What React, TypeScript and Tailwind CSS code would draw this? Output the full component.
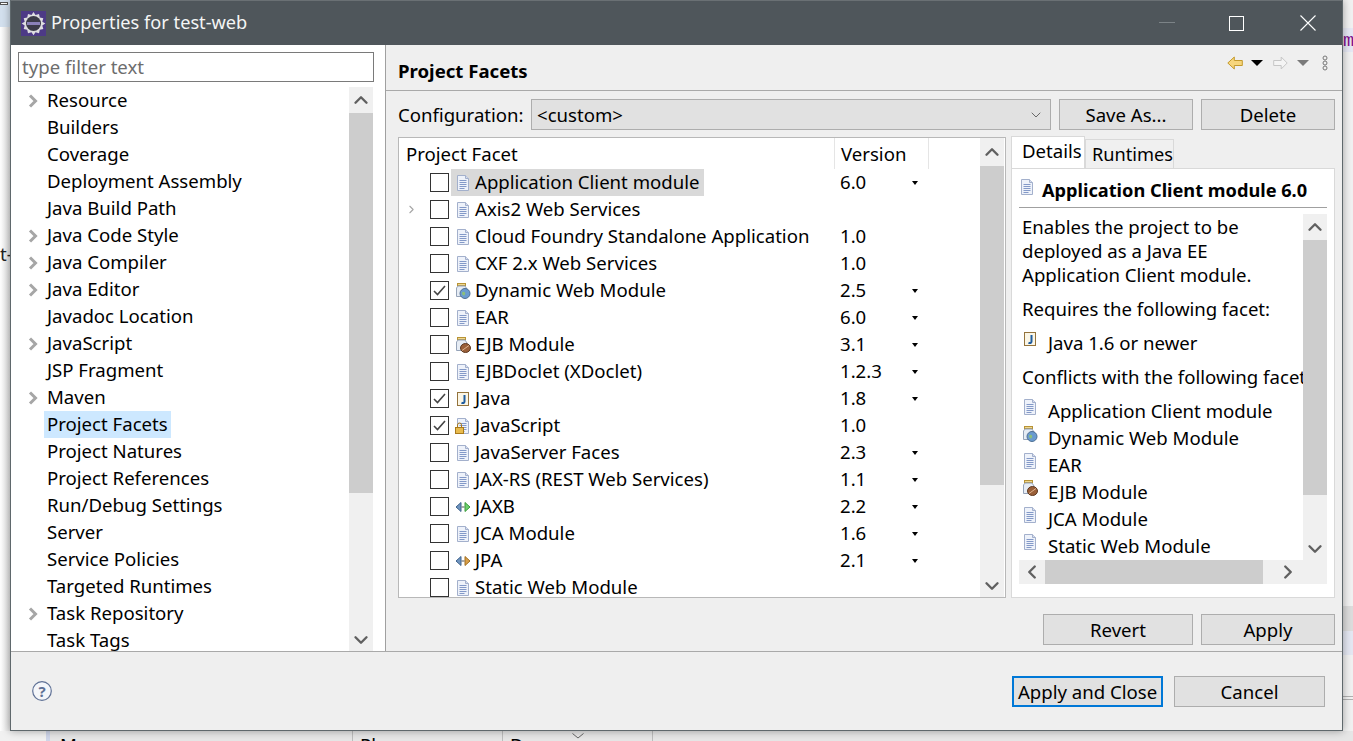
import React from 'react';
import { ChevronDown, ChevronLeft, ChevronRight, ChevronUp } from 'lucide-react';

const treeItems = [
  { name: 'Resource', arrow: true },
  { name: 'Builders' },
  { name: 'Coverage' },
  { name: 'Deployment Assembly' },
  { name: 'Java Build Path' },
  { name: 'Java Code Style', arrow: true },
  { name: 'Java Compiler', arrow: true },
  { name: 'Java Editor', arrow: true },
  { name: 'Javadoc Location' },
  { name: 'JavaScript', arrow: true },
  { name: 'JSP Fragment' },
  { name: 'Maven', arrow: true },
  { name: 'Project Facets', selected: true },
  { name: 'Project Natures' },
  { name: 'Project References' },
  { name: 'Run/Debug Settings' },
  { name: 'Server' },
  { name: 'Service Policies' },
  { name: 'Targeted Runtimes' },
  { name: 'Task Repository', arrow: true },
  { name: 'Task Tags' },
];

type IconKind = 'page' | 'web' | 'ejb' | 'java' | 'js' | 'jaxb' | 'jpa';

const facets: { name: string; icon: IconKind; version: string; drop?: boolean; checked?: boolean; selected?: boolean; expand?: boolean }[] = [
  { name: 'Application Client module', icon: 'page', version: '6.0', drop: true, selected: true },
  { name: 'Axis2 Web Services', icon: 'page', version: '', expand: true },
  { name: 'Cloud Foundry Standalone Application', icon: 'page', version: '1.0' },
  { name: 'CXF 2.x Web Services', icon: 'page', version: '1.0' },
  { name: 'Dynamic Web Module', icon: 'web', version: '2.5', drop: true, checked: true },
  { name: 'EAR', icon: 'page', version: '6.0', drop: true },
  { name: 'EJB Module', icon: 'ejb', version: '3.1', drop: true },
  { name: 'EJBDoclet (XDoclet)', icon: 'page', version: '1.2.3', drop: true },
  { name: 'Java', icon: 'java', version: '1.8', drop: true, checked: true },
  { name: 'JavaScript', icon: 'js', version: '1.0', checked: true },
  { name: 'JavaServer Faces', icon: 'page', version: '2.3', drop: true },
  { name: 'JAX-RS (REST Web Services)', icon: 'page', version: '1.1', drop: true },
  { name: 'JAXB', icon: 'jaxb', version: '2.2', drop: true },
  { name: 'JCA Module', icon: 'page', version: '1.6', drop: true },
  { name: 'JPA', icon: 'jpa', version: '2.1', drop: true },
  { name: 'Static Web Module', icon: 'page', version: '' },
];

const conflicts: { name: string; icon: IconKind }[] = [
  { name: 'Application Client module', icon: 'page' },
  { name: 'Dynamic Web Module', icon: 'web' },
  { name: 'EAR', icon: 'page' },
  { name: 'EJB Module', icon: 'ejb' },
  { name: 'JCA Module', icon: 'page' },
  { name: 'Static Web Module', icon: 'page' },
];

function FacetIcon({ kind }: { kind: IconKind }) {
  if (kind === 'page' || kind === 'js') {
    return (
      <svg width="16" height="16" viewBox="0 0 16 16" className="shrink-0">
        <path d="M2.500.500h8l3 3v12h-11z" fill="#eef2fa" stroke="#a3b0cc" />
        <path d="M10.500.500v3h3" fill="#d5dcee" stroke="#a3b0cc" />
        <path d="M4.500 5.500h7M4.500 7.500h7M4.500 9.500h7M4.500 11.500h7M4.500 13.500h5" stroke="#8399c8" />
        {kind === 'js' && (
          <g>
            <rect x="0.500" y="9.500" width="8" height="6" fill="#e8bb4e" stroke="#a97a1c" />
            <path d="M2.500 9.500V7a2 2 0 0 1 4 0v2.500" fill="none" stroke="#a97a1c" />
          </g>
        )}
      </svg>
    );
  }
  if (kind === 'java') {
    return (
      <svg width="16" height="16" viewBox="0 0 16 16" className="shrink-0">
        <rect x="2.500" y="1.500" width="11" height="13" fill="#fbf6e6" stroke="#94733c" />
        <path d="M9.500 4v6.500c0 1.500-1.500 2-3 1.200" fill="none" stroke="#1f5c9e" strokeWidth="2" />
      </svg>
    );
  }
  if (kind === 'web' || kind === 'ejb') {
    return (
      <svg width="16" height="16" viewBox="0 0 16 16" className="shrink-0">
        <rect x="2.500" y="0.500" width="8" height="2" fill="#f1d98e" stroke="#b89336" />
        <path d="M3 3h7l2 3v7.500H1.500V5z" fill="#e6ecf4" stroke="#95a3b8" />
        {kind === 'web' ? (
          <g>
            <circle cx="10" cy="10.500" r="5" fill="#6a9bcf" stroke="#4e6f93" />
            <path d="M7 9.500c2-2 4 0 3 2s-3 1-3-2z" fill="#8cc07a" />
          </g>
        ) : (
          <g>
            <ellipse cx="10.500" cy="11" rx="5" ry="4.500" fill="#9a5f38" stroke="#5f3a22" />
            <path d="M7 13.500l7-5" stroke="#e0b48f" />
          </g>
        )}
      </svg>
    );
  }
  return (
    <svg width="16" height="16" viewBox="0 0 16 16" className="shrink-0">
      <path d="M1 8l5-4.500v9z" fill="#6f94bf" stroke="#3f638c" />
      <path d="M15 8l-5-4.500v9z" fill={kind === 'jaxb' ? '#6fd06f' : '#d99f47'} stroke={kind === 'jaxb' ? '#3a9a3a' : '#a16f20'} />
      <path d="M6.500 8h3" stroke="#555" />
    </svg>
  );
}

function PushButton({ label, width, focused }: { label: string; width: string; focused?: boolean }) {
  return (
    <div
      className={`${width} flex h-[31px] items-center justify-center bg-[#e1e1e1] ${
        focused ? 'border-2 border-[#0078d7]' : 'border border-[#adadad]'
      }`}
    >
      {label}
    </div>
  );
}

function ArrowButton({ dir }: { dir: 'up' | 'down' | 'left' | 'right' }) {
  const Icon = { up: ChevronUp, down: ChevronDown, left: ChevronLeft, right: ChevronRight }[dir];
  return <Icon size={22} strokeWidth={2.600} className="text-[#606060]" />;
}

function VScrollbar({ before, thumb }: { before: string; thumb: string }) {
  return (
    <div className="flex w-[24px] shrink-0 flex-col self-stretch bg-[#f0f0f0]">
      <div className={`${before} flex shrink-0 items-center justify-center`}>
        <ArrowButton dir="up" />
      </div>
      <div className={`${thumb} shrink-0 bg-[#cdcdcd]`} />
      <div className="flex flex-1 items-end justify-center">
        <ArrowButton dir="down" />
      </div>
    </div>
  );
}

function Caret({ color }: { color: string }) {
  return (
    <svg width="12" height="8" viewBox="0 0 12 8">
      <path d="M0 1h12L6 7z" fill={color} />
    </svg>
  );
}

export default function App() {
  return (
    <div className="relative h-[741px] w-[1353px] overflow-hidden bg-[#f1f1f1] font-['Noto_Sans',sans-serif] text-[18.6px] leading-[27px] text-black">
      {/* the IDE behind the dialog */}
      <div className="absolute left-0 top-0 h-[27px] w-[10px] bg-[#d3e0ee]" />
      <div className="absolute left-0 top-[2px] h-[3px] w-[8px] border border-[#555] bg-white" />
      <div className="absolute left-0 top-[27px] h-[704px] w-[10px] bg-gradient-to-r from-white to-[#dedede]" />
      <div className="absolute left-0 top-[240px] text-[#222]">t-</div>
      <div className="absolute left-[1343px] top-[28px] h-[24px] w-[10px] bg-[#e6e8f4]" />
      <div className="absolute left-[1343px] top-[28px] font-['Liberation_Mono',monospace] text-[#7f0f8a]">m</div>
      <div className="absolute left-[1343px] top-[606px] h-[25px] w-[10px] bg-[#dcdcdc]" />
      <div className="absolute left-[1343px] top-[631px] h-[24px] w-[10px] bg-[#e4e7f2]" />
      <div className="absolute left-[1343px] top-[696px] h-[4px] w-[10px] border-y border-[#b0b0b0]" />
      <div className="absolute left-[46px] top-[731px] flex h-[10px] w-[1307px] border-l-4 border-[#cfd6ea] bg-[#e6e6e6]">
        <div className="w-[302px] pl-[10px] leading-[27px]">M</div>
        <div className="w-[150px] border-l border-[#bdbdbd] pl-[7px] leading-[27px]">Pl</div>
        <div className="w-[150px] border-l border-[#bdbdbd] pl-[7px] leading-[27px]">Da</div>
        <div className="border-l border-[#bdbdbd]" />
      </div>
      <svg width="12" height="6" viewBox="0 0 12 6" className="absolute left-[572px] top-[733px]">
        <path d="M.5.500L6 5 11.500.500" fill="none" stroke="#666" />
      </svg>

      <div className="relative ml-[10px] h-[731px] w-[1333px] border border-t-0 border-[#5f686c] bg-[#efefef] shadow-[0_0_8px_rgba(0,0,0,0.35)]">
        {/* title bar */}
        <div className="flex h-[45px] items-center border-t border-[#6a7074] bg-[#4f565b] pl-[10px] text-[#f4f5f5]">
          <svg width="25" height="25" viewBox="0 0 25 25" className="shrink-0">
            <rect width="25" height="25" fill="#4d3a86" />
            <path
              d="M12.500 1l2 3 3.500-1 .8 3.500 3.500.8-1 3.500 3 1.700-3 2 1 3.500-3.500.8-.8 3.500-3.500-1-2 3-2-3-3.500 1-.8-3.500-3.500-.8 1-3.500-3-2 3-1.700-1-3.500 3.500-.8.800-3.500 3.500 1z"
              fill="#dedee0"
            />
            <circle cx="12.500" cy="12.500" r="7.500" fill="#3b3a48" />
            <path d="M6 12.500h13" stroke="#8a80b8" strokeWidth="3" />
          </svg>
          <span className="mb-[2px] ml-[5px] text-[18.2px]">Properties for test-web</span>
          <div className="ml-auto flex items-center">
            <svg width="16" height="2" viewBox="0 0 16 2" className="mr-[54px]">
              <rect width="16" height="1" fill="#7c8387" />
            </svg>
            <div className="mr-[56px] h-[15px] w-[15px] border border-white" />
            <svg width="16" height="16" viewBox="0 0 16 16" className="mr-[26px]">
              <path d="M.5.500l15 15M15.500.500l-15 15" stroke="#fff" strokeWidth="1.100" />
            </svg>
          </div>
        </div>

        <div className="flex h-[607px] border-b border-[#a9a9a9]">
          {/* left tree */}
          <div className="flex w-[375px] shrink-0 flex-col border-r border-[#a0a0a0] bg-white pl-[7px] pr-[12px]">
            <div className="mt-[7px] flex h-[30px] w-[356px] shrink-0 items-center border border-[#7a7a7a] px-[3px] pb-[2px] text-[#6d6d6d]">
              type filter text
            </div>
            <div className="mt-[5px] flex h-[565px] overflow-hidden">
              <div className="flex-1">
                {treeItems.map((item) => (
                  <div key={item.name} className="flex h-[27px] items-center">
                    <div className="flex w-[26px] shrink-0 justify-center pl-[4px]">
                      {item.arrow && (
                        <svg width="10" height="14" viewBox="0 0 10 14">
                          <path d="M2 1.500L7.500 7 2 12.500" fill="none" stroke="#a6a6a6" strokeWidth="3" />
                        </svg>
                      )}
                    </div>
                    <span className={`h-[27px] px-[3px] leading-[25px] ${item.selected ? 'bg-[#cde8ff]' : ''}`}>{item.name}</span>
                  </div>
                ))}
              </div>
              <VScrollbar before="h-[26px]" thumb="h-[380px]" />
            </div>
          </div>

          {/* right page */}
          <div className="flex-1 pl-[12px] pr-[7px]">
            <div className="-ml-[12px] -mr-[7px] flex h-[46px] items-start border-b border-[#a9a9a9] pl-[12px] pr-[14px]">
              <span className="mt-[12px] font-bold">Project Facets</span>
              <div className="ml-auto flex h-[36px] items-center">
                <svg width="16" height="14" viewBox="0 0 16 14">
                  <path d="M.800 7l6.500-6v3.500h8v5h-8V13z" fill="#f7d67c" stroke="#c49a2c" />
                </svg>
                <span className="ml-[8px]"><Caret color="#000" /></span>
                <svg width="15" height="14" viewBox="0 0 15 14" className="ml-[10px]">
                  <path d="M14.200 7l-6-6v3.500H.700v5h7.500V13z" fill="#f4f4f4" stroke="#c6c6c6" />
                </svg>
                <span className="ml-[9px]"><Caret color="#7a7a7a" /></span>
                <svg width="6" height="16" viewBox="0 0 6 16" className="ml-[13px]">
                  <circle cx="3" cy="3" r="2" fill="none" stroke="#777" />
                  <circle cx="3" cy="8" r="2" fill="none" stroke="#777" />
                  <circle cx="3" cy="13" r="2" fill="none" stroke="#777" />
                </svg>
              </div>
            </div>

            <div className="mt-[8px] flex items-center">
              <span className="w-[133px] shrink-0">Configuration:</span>
              <div className="flex h-[31px] w-[520px] items-center justify-between border border-[#adadad] bg-[#e1e1e1] pl-[5px] pr-[6px]">
                &lt;custom&gt;
                <ChevronDown size={16} strokeWidth={1.300} className="text-[#555]" />
              </div>
              <div className="ml-[8px] flex gap-[8px]">
                <PushButton label="Save As..." width="w-[134px]" />
                <PushButton label="Delete" width="w-[134px]" />
              </div>
            </div>

            <div className="mt-[7px] flex h-[461px] gap-[5px]">
              {/* facets table */}
              <div className="flex w-[608px] shrink-0 overflow-hidden border border-[#b8b8b8] bg-white">
                <div className="min-w-0 flex-1">
                  <div className="flex h-[31px] items-center leading-[31px]">
                    <span className="w-[435px] shrink-0 pl-[7px]">Project Facet</span>
                    <span className="h-full w-[95px] shrink-0 border-x border-[#e5e5e5] pl-[6px]">Version</span>
                  </div>
                  {facets.map((f) => (
                    <div key={f.name} className="flex h-[27px] items-center">
                      <div className="flex w-[31px] shrink-0 justify-end pr-[12px]">
                        {f.expand && <ChevronRight size={13} strokeWidth={2} className="text-[#a6a6a6]" />}
                      </div>
                      <div className="flex h-[19px] w-[19px] shrink-0 items-center justify-center border border-[#333] bg-white">
                        {f.checked && (
                          <svg width="13" height="11" viewBox="0 0 13 11">
                            <path d="M1 6l3.500 3.500L12 1" fill="none" stroke="#444" strokeWidth="1.600" />
                          </svg>
                        )}
                      </div>
                      <div className="ml-[2px] flex h-[27px] w-[383px] shrink-0 items-center">
                        <div className={`flex h-[27px] items-center pl-[4px] pr-[4px] ${f.selected ? 'bg-[#d9d9d9]' : ''}`}>
                          <FacetIcon kind={f.icon} />
                          <span className="ml-[4px] h-[27px] whitespace-nowrap leading-[25px]">{f.name}</span>
                        </div>
                      </div>
                      <span className="h-[27px] w-[78px] shrink-0 pl-[6px] leading-[25px]">{f.version}</span>
                      {f.drop && (
                        <svg width="6" height="4" viewBox="0 0 6 4">
                          <path d="M0 0h6L3 4z" fill="#000" />
                        </svg>
                      )}
                    </div>
                  ))}
                </div>
                <VScrollbar before="h-[28px]" thumb="h-[319px]" />
                <div className="w-[1px] shrink-0" />
              </div>

              {/* details */}
              <div className="flex w-[324px] shrink-0 flex-col">
                <div className="flex h-[31px] items-end">
                  <div className="relative z-10 h-[32px] w-[74px] border border-b-0 border-[#d9d9d9] bg-white pl-[10px] leading-[28px]">Details</div>
                  <div className="h-[29px] w-[89px] border border-b-0 border-[#d9d9d9] bg-[#f0f0f0] pl-[6px] text-[18.2px] leading-[28px]">Runtimes</div>
                </div>
                <div className="min-h-0 flex-1 border border-[#d9d9d9] bg-white px-[7px]">
                  <div className="flex h-[39px] items-center border-b border-[#a0a0a0] pt-[5px]">
                    <div className="mb-[8px]"><FacetIcon kind="page" /></div>
                    <span className="ml-[7px] text-[18.2px] font-bold">Application Client module 6.0</span>
                  </div>
                  <div className="relative mt-[6px] flex h-[370px]">
                    <div className="min-w-0 flex-1 overflow-hidden whitespace-nowrap pl-[3px] pt-[1px]">
                      <div className="leading-[24px]">Enables the project to be<br />deployed as a Java EE<br />Application Client module.</div>
                      <div className="mt-[10px] leading-[24px]">Requires the following facet:</div>
                      <div className="mt-[8px] flex h-[27px] items-start">
                        <div className="mt-[2px]"><FacetIcon kind="java" /></div>
                        <span className="ml-[10px]">Java 1.6 or newer</span>
                      </div>
                      <div className="mt-[7px] h-[27px]">Conflicts with the following facet</div>
                      <div className="mt-[7px]">
                        {conflicts.map((c) => (
                          <div key={c.name} className="flex h-[27px] items-start">
                            <div className="mt-[2px]"><FacetIcon kind={c.icon} /></div>
                            <span className="ml-[10px]">{c.name}</span>
                          </div>
                        ))}
                      </div>
                    </div>
                    <div className="flex h-[346px] w-[24px] shrink-0">
                      <VScrollbar before="h-[26px]" thumb="h-[255px]" />
                    </div>
                    {/* horizontal scrollbar sits over the bottom of the text */}
                    <div className="absolute bottom-0 left-0 flex h-[24px] w-full items-center bg-[#f0f0f0]">
                      <div className="flex w-[26px] justify-center"><ArrowButton dir="left" /></div>
                      <div className="h-full w-[218px] bg-[#cdcdcd]" />
                      <div className="flex w-[50px] justify-center"><ArrowButton dir="right" /></div>
                    </div>
                  </div>
                </div>
              </div>
            </div>

            <div className="mt-[16px] flex justify-end gap-[8px]">
              <PushButton label="Revert" width="w-[150px]" />
              <PushButton label="Apply" width="w-[134px]" />
            </div>
          </div>
        </div>

        {/* footer */}
        <div className="flex h-[78px] items-center pl-[21px] pr-[17px]">
          <svg width="20" height="20" viewBox="0 0 20 20">
            <circle cx="10" cy="10" r="9.300" fill="#f4f6fa" stroke="#5f7196" strokeWidth="1.200" />
            <text x="10" y="15.500" textAnchor="middle" fontSize="15" fontWeight="700" fill="#5f7196" fontFamily="Noto Sans">?</text>
          </svg>
          <div className="ml-auto flex gap-[11px]">
            <PushButton label="Apply and Close" width="w-[151px]" focused />
            <PushButton label="Cancel" width="w-[151px]" />
          </div>
        </div>
      </div>
    </div>
  );
}
